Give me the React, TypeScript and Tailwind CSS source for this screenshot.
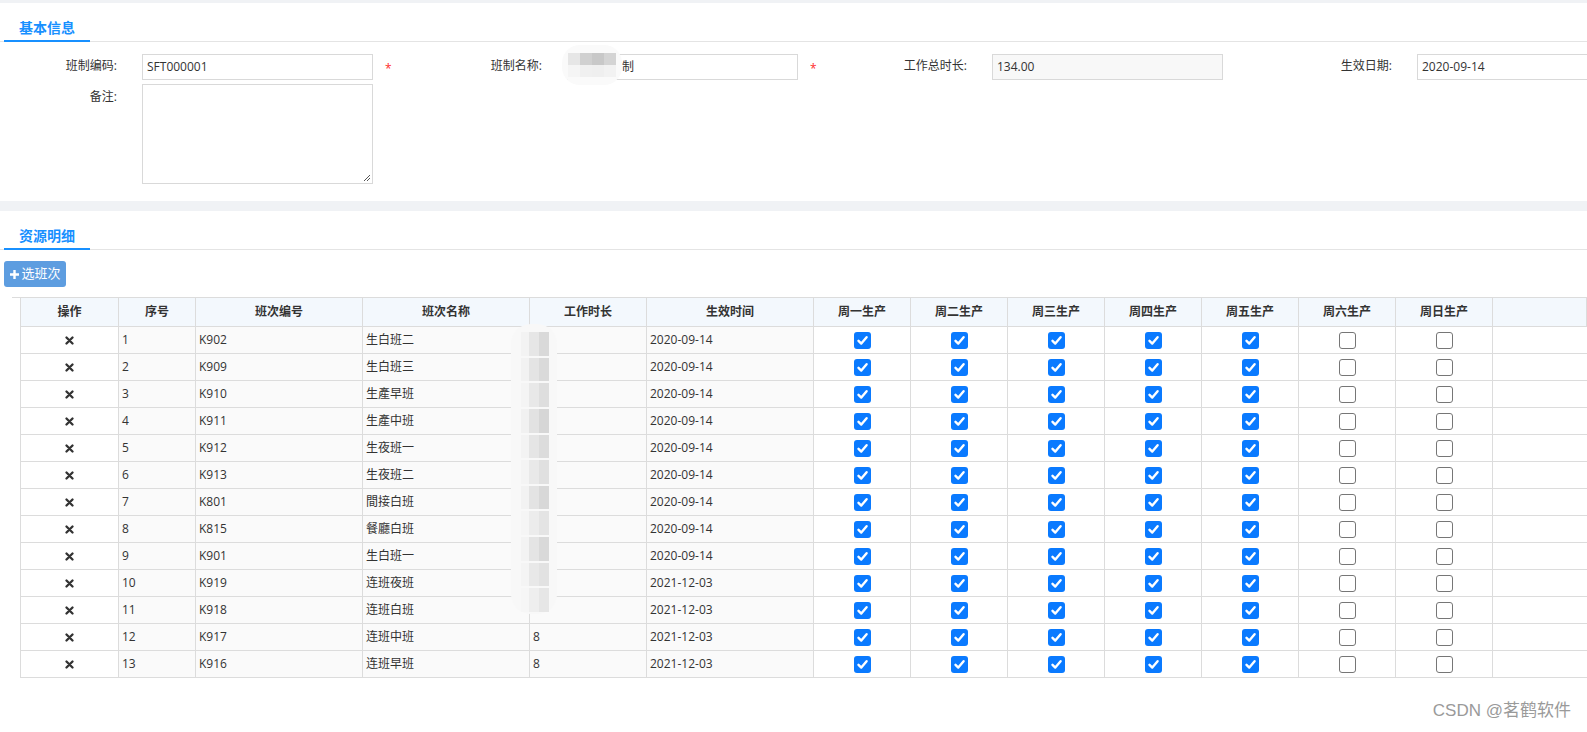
import React from 'react';

const FONT = "font-['Open_Sans','Noto_Sans_CJK_SC',sans-serif]";

const rows = [
  { no: 1, code: 'K902', name: '生白班二', hours: '', date: '2020-09-14' },
  { no: 2, code: 'K909', name: '生白班三', hours: '', date: '2020-09-14' },
  { no: 3, code: 'K910', name: '生產早班', hours: '', date: '2020-09-14' },
  { no: 4, code: 'K911', name: '生產中班', hours: '', date: '2020-09-14' },
  { no: 5, code: 'K912', name: '生夜班一', hours: '', date: '2020-09-14' },
  { no: 6, code: 'K913', name: '生夜班二', hours: '', date: '2020-09-14' },
  { no: 7, code: 'K801', name: '間接白班', hours: '', date: '2020-09-14' },
  { no: 8, code: 'K815', name: '餐廳白班', hours: '', date: '2020-09-14' },
  { no: 9, code: 'K901', name: '生白班一', hours: '', date: '2020-09-14' },
  { no: 10, code: 'K919', name: '连班夜班', hours: '', date: '2021-12-03' },
  { no: 11, code: 'K918', name: '连班白班', hours: '', date: '2021-12-03' },
  { no: 12, code: 'K917', name: '连班中班', hours: '8', date: '2021-12-03' },
  { no: 13, code: 'K916', name: '连班早班', hours: '8', date: '2021-12-03' },
];

const days = ['周一生产', '周二生产', '周三生产', '周四生产', '周五生产', '周六生产', '周日生产'];

// mosaic shades for the blurred hour column
const mosaic = [
  ['#f3f3f3', '#e6e6e6', '#d9d9d9'],
  ['#f2f2f2', '#e4e4e4', '#dadada'],
  ['#f4f4f4', '#e8e8e8', '#dedede'],
  ['#f1f1f1', '#e2e2e2', '#d6d6d6'],
  ['#f3f3f3', '#e5e5e5', '#dcdcdc'],
  ['#f4f4f4', '#e9e9e9', '#e0e0e0'],
  ['#f2f2f2', '#e3e3e3', '#d8d8d8'],
  ['#f5f5f5', '#ececec', '#e4e4e4'],
  ['#f3f3f3', '#e4e4e4', '#d9d9d9'],
  ['#f4f4f4', '#e8e8e8', '#e2e2e2'],
  ['#f6f6f6', '#eeeeee', '#e6e6e6'],
];

const cols = 'grid-cols-[98px_77px_167px_167px_117px_167px_97px_97px_97px_97px_97px_97px_97px_1fr]';

const Check = ({ on }: { on: boolean }) =>
  on ? (
    <span className="w-[17px] h-[17px] rounded-[3px] bg-[#0a7aff] flex items-center justify-center">
      <svg width="13" height="13" viewBox="0 0 13 13">
        <path d="M2.5 6.8 L5.3 9.6 L10.6 3.2" fill="none" stroke="#fff" strokeWidth="2.4" strokeLinecap="round" strokeLinejoin="round" />
      </svg>
    </span>
  ) : (
    <span className="w-[17px] h-[17px] rounded-[3px] border border-[#767676] bg-white" />
  );

const Tab = ({ title }: { title: string }) => (
  <div className="h-[39px] border-b border-[#e4e4e4] flex items-end">
    <div className="ml-[4px] w-[86px] h-full pt-[10px] flex items-center justify-center border-b-2 border-[#1890ff] -mb-px text-[14px] font-bold text-[#1890ff]">
      {title}
    </div>
  </div>
);

const Field = ({ label, children, required }: { label: string; children: React.ReactNode; required?: boolean }) => (
  <div className="w-[425px] shrink-0 flex items-start">
    <div className="w-[117px] text-right text-[12px] text-[#333] pt-[3px]">{label}</div>
    <div className="ml-[25px] w-[231px] shrink-0">{children}</div>
    {required && <span className="ml-[12px] mt-[6px] text-[12px] text-[#ff2a2a]">*</span>}
  </div>
);

const App = () => {
  return (
    <div className={`relative w-[1587px] h-[732px] overflow-hidden bg-white text-[#333] ${FONT}`}>
      <div className="h-[3px] bg-[#f0f2f5]" />

      {/* 基本信息 */}
      <Tab title="基本信息" />
      <div className="pt-[12px] pb-[17px]">
        <div className="flex">
          <Field label="班制编码:" required>
            <div className="h-[26px] border border-[#d9d9d9] px-[4px] flex items-center text-[12px]">SFT000001</div>
          </Field>
          <Field label="班制名称:" required>
            <div className="relative h-[26px] border border-[#d9d9d9] flex items-center text-[12px]">
              <div className="absolute -left-[6px] -top-[10px] w-[60px] h-[40px] rounded-[18px] bg-[#fafafa] flex flex-col justify-center">
                <div className="flex h-[12px] ml-[6px]">
                  <span className="w-[12px] bg-[#e6e6e6]" />
                  <span className="w-[12px] bg-[#d0d0d0]" />
                  <span className="w-[12px] bg-[#c8c8c8]" />
                  <span className="w-[12px] bg-[#d4d4d4]" />
                </div>
                <div className="flex h-[12px] ml-[6px]">
                  <span className="w-[12px] bg-[#f5f5f5]" />
                  <span className="w-[12px] bg-[#f0f0f0]" />
                  <span className="w-[12px] bg-[#efefef]" />
                  <span className="w-[12px] bg-[#f2f2f2]" />
                </div>
              </div>
              <span className="ml-[54px]">制</span>
            </div>
          </Field>
          <Field label="工作总时长:">
            <div className="h-[26px] border border-[#d9d9d9] bg-[#f8f8f8] px-[4px] flex items-center text-[12px]">134.00</div>
          </Field>
          <Field label="生效日期:">
            <div className="h-[26px] w-[260px] border border-[#d9d9d9] px-[4px] flex items-center text-[12px]">2020-09-14</div>
          </Field>
        </div>
        <div className="flex mt-[4px]">
          <div className="w-[425px] shrink-0 flex items-start">
            <div className="w-[117px] text-right text-[12px] pt-[4px]">备注:</div>
            <div className="ml-[25px] w-[231px] h-[100px] border border-[#d9d9d9] relative">
              <svg className="absolute right-[1px] bottom-[1px]" width="9" height="9" viewBox="0 0 9 9">
                <path d="M8 2 L2 8 M8 5 L5 8" stroke="#555" strokeWidth="1" />
              </svg>
            </div>
          </div>
        </div>
      </div>

      <div className="h-[10px] bg-[#f0f2f5]" />

      {/* 资源明细 */}
      <Tab title="资源明细" />
      <div className="pt-[11px]">
        <button className="ml-[4px] h-[26px] w-[62px] rounded-[3px] bg-[#5d9de0] text-white text-[13px] flex items-center justify-center gap-[1px]">
          <svg width="11" height="11" viewBox="0 0 11 11">
            <path d="M5.5 1 V10 M1 5.5 H10" stroke="#fff" strokeWidth="2.4" />
          </svg>
          选班次
        </button>
      </div>

      <div className="mt-[10px] ml-[12px] border-t border-[#dcdcdc]">
        <div className="relative ml-[8px] border-l border-[#dcdcdc] text-[12px]">
          <div className={`grid ${cols} bg-[#f3f8fd] font-semibold`}>
            {['操作', '序号', '班次编号', '班次名称', '工作时长', '生效时间', ...days, ''].map((h, i) => (
              <div key={i} className="h-[29px] border-r border-b border-[#dcdcdc] flex items-center justify-center">
                {h}
              </div>
            ))}
          </div>
          {rows.map((r) => (
            <div key={r.no} className={`grid ${cols}`}>
              <div className="h-[27px] border-r border-b border-[#dcdcdc] flex items-center justify-center">
                <svg width="9" height="9" viewBox="0 0 9 9">
                  <path d="M1.5 1.5 L7.5 7.5 M7.5 1.5 L1.5 7.5" stroke="#333" strokeWidth="2.3" strokeLinecap="round" />
                </svg>
              </div>
              {[String(r.no), r.code, r.name, r.hours, r.date].map((v, i) => (
                <div key={i} className="h-[27px] border-r border-b border-[#dcdcdc] bg-[#fafafa] pl-[3px] flex items-center">
                  {v}
                </div>
              ))}
              {days.map((d, i) => (
                <div key={d} className="h-[27px] border-r border-b border-[#dcdcdc] flex items-center justify-center">
                  <Check on={i < 5} />
                </div>
              ))}
              <div className="h-[27px] border-b border-[#dcdcdc]" />
            </div>
          ))}

          {/* blurred hours */}
          <div className="absolute left-[490px] top-[26px] w-[46px] h-[290px] rounded-[20px] bg-[#f8f8f8] flex flex-col pt-[8px] pl-[10px]">
            {mosaic.map((m, i) => (
              <div key={i} className="flex h-[24px] mb-[2px]">
                <span className="w-[8px]" style={{ background: m[0] }} />
                <span className="w-[10px]" style={{ background: m[1] }} />
                <span className="w-[10px]" style={{ background: m[2] }} />
              </div>
            ))}
          </div>
        </div>
      </div>

      <div className="absolute right-[16px] bottom-[9px] text-[17px] text-[#9a9a9a] font-['Liberation_Sans','Noto_Sans_CJK_SC',sans-serif] [text-shadow:0_0_1px_#fff]">
        CSDN @茗鹤软件
      </div>
    </div>
  );
};

export default App;
